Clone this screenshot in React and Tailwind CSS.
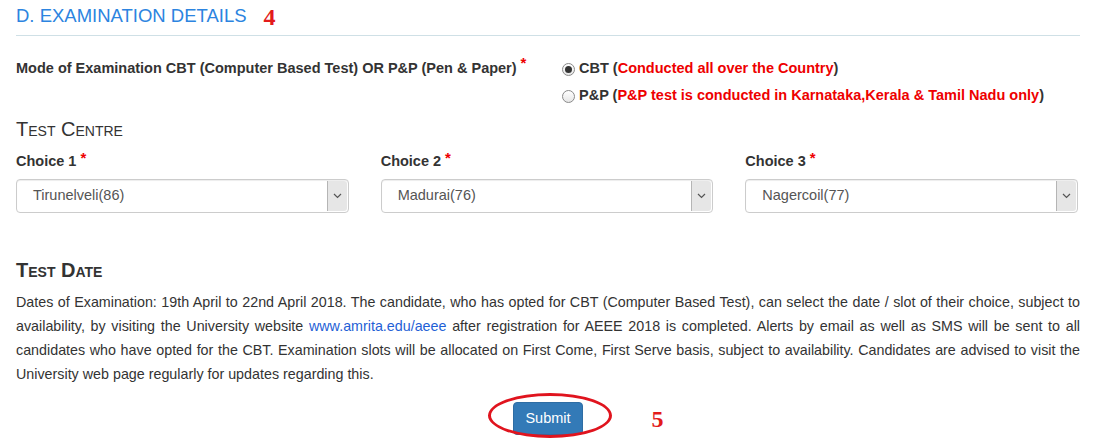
import React from "react";

const font = { fontFamily: '"Liberation Sans", Arial, sans-serif' };

// --- Radio ---
const Radio = ({ checked }) => (
  <span className="w-[13px] h-[13px] rounded-full border border-[#8a8a8a] bg-gradient-to-b from-white to-[#e6e6e6] flex items-center justify-center shrink-0">
    {checked && <span className="w-[7px] h-[7px] rounded-full bg-[#333]" />}
  </span>
);

// --- Select ---
const FakeSelect = ({ label, value }) => (
  <div className="flex flex-col">
    <div className="text-[14.5px] font-bold text-[#333] h-[20px] flex items-start">
      {label}
      <span className="text-[#e00] ml-[4px] text-[15px] leading-[14px]">*</span>
    </div>
    <div className="mt-[8px] h-[34px] border border-[#ccc] rounded-[4px] flex items-stretch bg-white shadow-[inset_0_1px_1px_rgba(0,0,0,0.075)]">
      <div className="flex-1 pl-[16px] flex items-center text-[14.5px] text-[#555]">{value}</div>
      <div className="w-[20px] my-[1px] mr-[1px] bg-[#e6e6e6] border-l border-[#b5b5b5] rounded-r-[3px] flex items-center justify-center">
        <svg width="9" height="6" viewBox="0 0 9 6">
          <path d="M1 1 L4.5 4.5 L8 1" fill="none" stroke="#555" strokeWidth="1.2" />
        </svg>
      </div>
    </div>
  </div>
);

const App = () => {
  return (
    <div className="w-[1100px] h-[440px] bg-white px-[16px] overflow-hidden" style={font}>
      {/* Heading */}
      <div className="flex items-end pt-[3px] h-[36px] border-b border-[#cfe0e6] mr-[4px]">
        <h2 className="text-[18.5px] text-[#2c84e0] pb-[8px] leading-[22px]">D. EXAMINATION DETAILS</h2>
        <span
          className="text-[24px] font-bold text-[#e31b1b] ml-[17px] pb-[6px] leading-[24px]"
          style={{ fontFamily: '"Liberation Serif", "Times New Roman", serif' }}
        >
          4
        </span>
      </div>

      {/* Mode of Examination */}
      <div className="flex mt-[20px]">
        <div className="w-[546px] text-[14.5px] font-bold text-[#333] flex items-start">
          <span className="mt-[2px]">Mode of Examination CBT (Computer Based Test) OR P&amp;P (Pen &amp; Paper)</span>
          <span className="text-[#e00] ml-[4px] text-[15px] leading-[14px]">*</span>
        </div>
        <div className="flex flex-col gap-[7px] pt-[3px] text-[14.5px] font-bold text-[#333]">
          <div className="flex items-center gap-[4px] h-[20px]">
            <Radio checked />
            <span>
              CBT (<span className="text-[#e00]">Conducted all over the Country</span>)
            </span>
          </div>
          <div className="flex items-center gap-[4px] h-[20px]">
            <Radio />
            <span>
              P&amp;P (<span className="text-[#e00]">P&amp;P test is conducted in Karnataka,Kerala &amp; Tamil Nadu only</span>)
            </span>
          </div>
        </div>
      </div>

      {/* Test Centre */}
      <h3 className="mt-[10px] text-[20px] text-[#333] leading-[26px]" style={{ fontVariant: "small-caps" }}>
        Test Centre
      </h3>
      <div className="grid grid-cols-3 gap-x-[32px] mt-[9px] mr-[6px]">
        <FakeSelect label="Choice 1" value="Tirunelveli(86)" />
        <FakeSelect label="Choice 2" value="Madurai(76)" />
        <FakeSelect label="Choice 3" value="Nagercoil(77)" />
      </div>

      {/* Test Date */}
      <h3 className="mt-[44px] text-[20px] font-bold text-[#333] leading-[26px]" style={{ fontVariant: "small-caps" }}>
        Test Date
      </h3>
      <p className="mt-[7px] text-[14.3px] leading-[24px] text-[#333] text-justify mr-[4px]">
        Dates of Examination: 19th April to 22nd April 2018. The candidate, who has opted for CBT (Computer Based Test), can select the date / slot of their choice, subject to availability, by visiting the University website{" "}
        <span className="text-[#1f5fd6]">www.amrita.edu/aeee</span> after registration for AEEE 2018 is completed. Alerts by email as well as SMS will be sent to all candidates who have opted for the CBT. Examination slots will be allocated on First Come, First Serve basis, subject to availability. Candidates are advised to visit the University web page regularly for updates regarding this.
      </p>

      {/* Submit */}
      <div className="flex justify-center mt-[16px] pr-[4px]">
        <div className="relative">
          <button className="h-[33px] px-[11px] bg-[#337ab7] border border-[#2e6da4] rounded-[4px] text-white text-[14.5px]">
            Submit
          </button>
          <span className="absolute left-[-25px] top-[-9px] w-[124px] h-[45px] rounded-[50%] border-[3px] border-[#e0141e] pointer-events-none" />
          <span
            className="absolute left-[138px] top-[-1px] text-[24px] font-bold text-[#e31b1b]"
            style={{ fontFamily: '"Liberation Serif", "Times New Roman", serif' }}
          >
            5
          </span>
        </div>
      </div>
    </div>
  );
};

export default App;
